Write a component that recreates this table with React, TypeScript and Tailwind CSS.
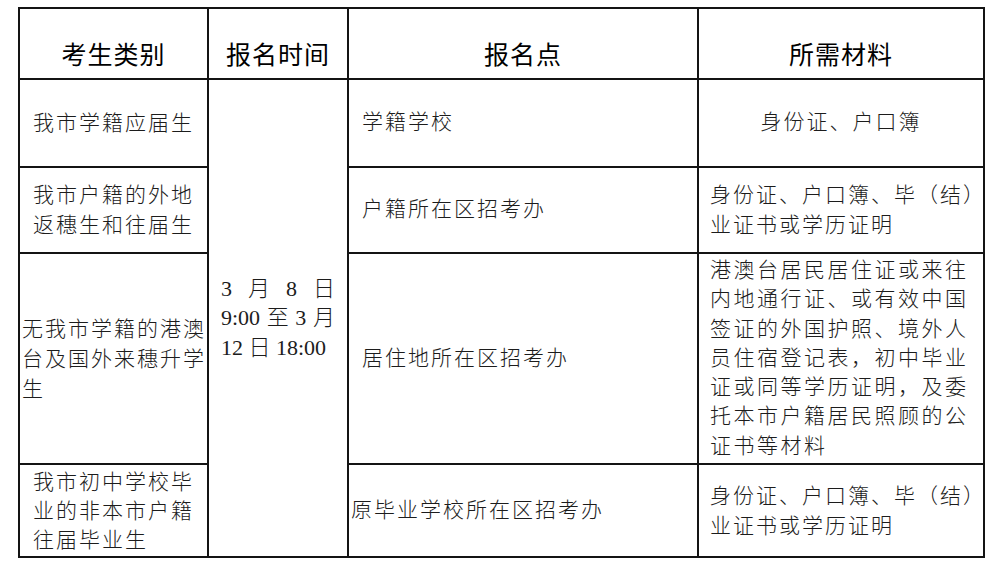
const body = "font-['Liberation_Serif','Noto_Sans_CJK_SC',serif] font-light text-[21px] tracking-[2px] text-[#1c1c1c]";
const border = "border-2 border-[#141414] p-0";
const cell = `${border} align-middle`;

const Lines = ({ lines, className = "" }: { lines: string[]; className?: string }) => (
  <div className={className}>
    {lines.map((l) => (
      <div key={l} className="whitespace-nowrap">{l}</div>
    ))}
  </div>
);

const App = () => {
  return (
    <div className="w-[1000px] h-[568px] bg-white pt-[7px] pl-[18px]">
      <table className="table-fixed border-collapse w-[965px]">
        <colgroup>
          <col className="w-[189px]" />
          <col className="w-[140px]" />
          <col className="w-[350px]" />
          <col className="w-[286px]" />
        </colgroup>
        <thead>
          <tr className="h-[71px]">
            {["考生类别", "报名时间", "报名点", "所需材料"].map((h) => (
              <th
                key={h}
                className={`${border} align-bottom pb-[7px] text-center font-['Noto_Sans_CJK_SC',sans-serif] font-normal text-[25px] leading-[36px] tracking-[1px] text-black`}
              >
                {h}
              </th>
            ))}
          </tr>
        </thead>
        <tbody className={body}>
          {/* 应届生 */}
          <tr className="h-[88px]">
            <td className={`${cell} pl-[13px] leading-[30px]`}>我市学籍应届生</td>
            <td rowSpan={4} className={`${cell} pl-[12px] leading-[29.5px] text-[22px]`}>
              <div className="w-[114px] tracking-normal">
                <div className="flex justify-between">
                  <span>3</span>
                  <span>月</span>
                  <span>8</span>
                  <span>日</span>
                </div>
                <div className="flex justify-between">
                  <span>9:00</span>
                  <span>至</span>
                  <span>3</span>
                  <span>月</span>
                </div>
                <div className="whitespace-nowrap">12 日 18:00</div>
              </div>
            </td>
            <td className={`${cell} pl-[13px]`}>学籍学校</td>
            <td className={`${cell} text-center`}>身份证、户口簿</td>
          </tr>

          {/* 外地返穗 */}
          <tr className="h-[86px]">
            <td className={`${cell} pl-[13px] leading-[30px]`}>
              <Lines lines={["我市户籍的外地", "返穗生和往届生"]} />
            </td>
            <td className={`${cell} pl-[13px]`}>户籍所在区招考办</td>
            <td className={`${cell} pl-[11px] leading-[30px]`}>
              <Lines lines={["身份证、户口簿、毕（结）", "业证书或学历证明"]} />
            </td>
          </tr>

          {/* 港澳台及国外 */}
          <tr className="h-[211px]">
            <td className={`${cell} pl-[2px] leading-[30px]`}>
              <Lines lines={["无我市学籍的港澳", "台及国外来穗升学", "生"]} />
            </td>
            <td className={`${cell} pl-[13px]`}>居住地所在区招考办</td>
            <td className={`${cell} pl-[11px] leading-[29.2px] tracking-[2.5px]`}>
              <Lines
                lines={[
                  "港澳台居民居住证或来往",
                  "内地通行证、或有效中国",
                  "签证的外国护照、境外人",
                  "员住宿登记表，初中毕业",
                  "证或同等学历证明，及委",
                  "托本市户籍居民照顾的公",
                  "证书等材料",
                ]}
              />
            </td>
          </tr>

          {/* 非本市户籍往届 */}
          <tr className="h-[93px]">
            <td className={`${cell} pl-[13px] leading-[29px] pt-[2px]`}>
              <Lines lines={["我市初中学校毕", "业的非本市户籍", "往届毕业生"]} />
            </td>
            <td className={`${cell} pl-[2px]`}>原毕业学校所在区招考办</td>
            <td className={`${cell} pl-[11px] leading-[30px]`}>
              <Lines lines={["身份证、户口簿、毕（结）", "业证书或学历证明"]} />
            </td>
          </tr>
        </tbody>
      </table>
    </div>
  );
};

export default App;
